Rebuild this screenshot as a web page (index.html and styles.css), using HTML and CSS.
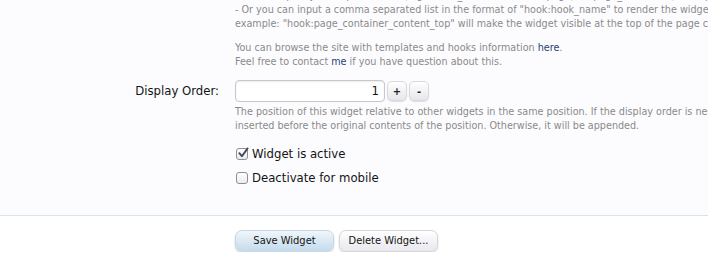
FILE: index.html
```html
<!DOCTYPE html>
<html lang="en">
<head>
<meta charset="utf-8">
<title>Widget Options</title>
<link rel="stylesheet" href="styles.css">
</head>
<body>
<div class="form">
  <div class="upper">
    <div class="row first">
      <div class="label"></div>
      <div class="control">
        <p class="explain lead">- You can specify a template name (e.g. forum_list for the forum page), or page_container (for all pages).<br>
        - Or you can input a comma separated list in the format of "hook:hook_name" to render the widget at a template hook. For<br>
        example: "hook:page_container_content_top" will make the widget visible at the top of the page content area.</p>
        <p class="explain">You can browse the site with templates and hooks information <a href="#">here</a>.<br>
        Feel free to contact <a href="#">me</a> if you have question about this.</p>
      </div>
    </div>
    <div class="row order">
      <div class="label"><label>Display Order:</label></div>
      <div class="control">
        <div class="spinbox">
          <div class="textbox">1</div>
          <button class="spin">+</button>
          <button class="spin">-</button>
        </div>
        <p class="explain help">The position of this widget relative to other widgets in the same position. If the display order is negative, the widget will be<br>
        inserted before the original contents of the position. Otherwise, it will be appended.</p>
      </div>
    </div>
    <div class="row checks">
      <div class="label"></div>
      <div class="control">
        <ul class="checklist">
          <li><span class="box checked"><svg viewBox="0 0 12 12" width="12" height="12"><path d="M2.3 6.2 L4.9 9.2 L10.6 1.4" fill="none" stroke="#3a4a5c" stroke-width="1.9" stroke-linecap="round" stroke-linejoin="round"/></svg></span>Widget is active</li>
          <li><span class="box"></span>Deactivate for mobile</li>
        </ul>
      </div>
    </div>
  </div>
  <div class="submit">
    <div class="label"></div>
    <div class="control buttons">
      <button class="button primary">Save Widget</button>
      <button class="button">Delete Widget...</button>
    </div>
  </div>
</div>
</body>
</html>
```

FILE: styles.css
```css
html, body {
  margin: 0;
  padding: 0;
  background: #ffffff;
}

body {
  font-family: "DejaVu Sans Condensed", "Liberation Sans", Arial, sans-serif;
  color: #141414;
  overflow: hidden;
}

.form {
  width: 708px;
}

.upper {
  background: #fcfcfe;
  padding-bottom: 28px;
  border-bottom: 1px solid #d6e4ed;
}

.row {
  display: flex;
  align-items: flex-start;
}

.label {
  width: 219px;
  flex: none;
  text-align: right;
  padding-right: 16px;
  font-size: 13px;
}

.control {
  flex: 1;
  min-width: 0;
}

.explain {
  margin: 0;
  font-size: 10.7px;
  line-height: 13.5px;
  color: #8a8a8a;
  white-space: nowrap;
}

.explain.lead {
  line-height: 14px;
}

.explain + .explain {
  margin-top: 10px;
}

.explain a {
  color: #1f4273;
  text-decoration: none;
}

.row.first {
  margin-top: -11px;
}

.row.order {
  margin-top: 12px;
}

.row.order .label {
  line-height: 22px;
}

.spinbox {
  display: flex;
  align-items: center;
  gap: 2px;
}

.textbox {
  box-sizing: border-box;
  width: 150px;
  height: 22px;
  border: 1px solid #c8c8cc;
  border-radius: 4px;
  background: #ffffff;
  box-shadow: inset 0 1px 2px rgba(0, 0, 0, 0.08);
  font-size: 13px;
  line-height: 20px;
  text-align: right;
  padding-right: 5px;
  color: #141414;
}

.spin {
  box-sizing: border-box;
  width: 20px;
  height: 20px;
  padding: 0;
  margin: 0;
  border: 1px solid #d8d8de;
  border-radius: 5px;
  background: linear-gradient(#ffffff, #e6e6ec);
  box-shadow: 0 1px 1px rgba(0, 0, 0, 0.12);
  font-family: inherit;
  font-size: 11px;
  font-weight: bold;
  line-height: 17px;
  color: #222;
}

.help {
  margin-top: 3px;
  line-height: 14px;
}

.row.checks {
  margin-top: 12px;
}

.checklist {
  list-style: none;
  margin: 0;
  padding: 0;
  font-size: 13px;
}

.checklist li {
  display: flex;
  align-items: center;
  height: 18px;
  line-height: 18px;
}

.checklist li + li {
  margin-top: 6px;
}

.box {
  box-sizing: border-box;
  width: 12px;
  height: 12px;
  margin-left: 1px;
  margin-right: 4px;
  border: 1px solid #8e8e94;
  border-radius: 3px;
  background: linear-gradient(#ffffff, #ececf0);
  display: flex;
  align-items: center;
  justify-content: center;
  overflow: visible;
}

.box svg {
  flex: none;
  margin-top: -2px;
  margin-left: 1px;
}

.submit {
  display: flex;
  padding-top: 14px;
}

.buttons {
  display: flex;
  gap: 5px;
}

.button {
  box-sizing: border-box;
  height: 22px;
  width: 99px;
  padding: 0;
  border: 1px solid #d4d6dc;
  border-radius: 7px;
  background: linear-gradient(#ffffff, #e8e8ee);
  box-shadow: 0 1px 2px rgba(0, 0, 0, 0.18);
  font-family: inherit;
  font-size: 11px;
  color: #141414;
  line-height: 20px;
}

.button.primary {
  border-color: #c6d8e6;
  background: linear-gradient(#f0f6fb, #c4dbec);
}
```
